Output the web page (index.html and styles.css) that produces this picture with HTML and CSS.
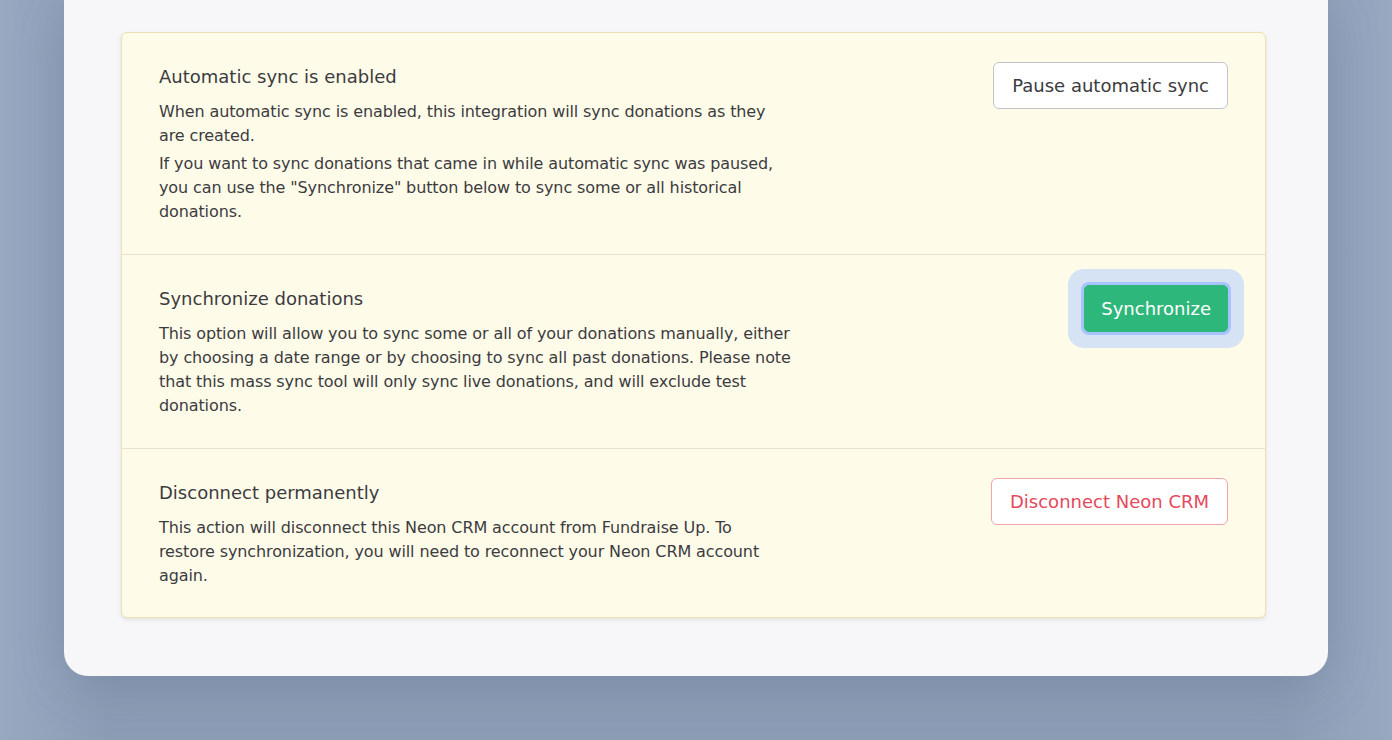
FILE: index.html
```html
<!DOCTYPE html>
<html lang="en">
<head>
    <meta charset="UTF-8">
    <meta name="viewport" content="width=device-width, initial-scale=1.0">
    <title>Neon CRM integration</title>
    <link rel="stylesheet" href="styles.css">
</head>
<body>

    <div class="panel">
        <div class="sync-card">
            <div class="sync-row">
                <div class="sync-text">
                    <h3>Automatic sync is enabled</h3>
                    <p>When automatic sync is enabled, this integration will sync donations as they are created.</p>
                    <p>If you want to sync donations that came in while automatic sync was paused, you can use the "Synchronize" button below to sync some or all historical donations.</p>
                </div>
                <button type="button" class="btn btn-default">Pause automatic sync</button>
            </div>

            <div class="sync-row">
                <div class="sync-text">
                    <h3>Synchronize donations</h3>
                    <p>This option will allow you to sync some or all of your donations manually, either by choosing a date range or by choosing to sync all past donations. Please note that this mass sync tool will only sync live donations, and will exclude test donations.</p>
                </div>
                <button type="button" class="btn btn-primary focused">Synchronize</button>
            </div>

            <div class="sync-row">
                <div class="sync-text">
                    <h3>Disconnect permanently</h3>
                    <p>This action will disconnect this Neon CRM account from Fundraise Up. To restore synchronization, you will need to reconnect your Neon CRM account again.</p>
                </div>
                <button type="button" class="btn btn-danger">Disconnect Neon CRM</button>
            </div>
        </div>
    </div>

</body>
</html>
```

FILE: styles.css
```css
body {
    margin: 0;
    font-family: "DejaVu Sans", Arial, sans-serif;
    color: #3b3b40;
    background: linear-gradient(90deg, #98a8c1 0%, #8c9cb5 8%, #8c9cb5 92%, #98a8c1 100%);
    min-height: 740px;
}
.panel {
    margin: 0 64px;
    padding: 32px 62px 58px 57px;
    background-color: #f7f7fa;
    border-radius: 0 0 24px 24px;
    box-shadow: 0 10px 50px rgba(70, 90, 120, 0.25);
}
.sync-card {
    background-color: #fffbe9;
    border: 1px solid #eee0b6;
    border-radius: 6px;
    box-shadow: 0 2px 4px rgba(120, 110, 80, 0.15);
}
.sync-row {
    display: flex;
    justify-content: space-between;
    align-items: flex-start;
    padding: 30px 37px 30px 37px;
    border-top: 1px solid #ebe3c9;
}
.sync-row:first-child {
    border-top: none;
}
.sync-row:last-child {
    padding-bottom: 29px;
}
.sync-text {
    max-width: 633px;
    padding-top: 1px;
}
.sync-text h3 {
    margin: 0 0 10px;
    font-size: 18px;
    font-weight: 400;
    line-height: 26px;
}
.sync-text p {
    margin: 0 0 4px;
    font-size: 16px;
    line-height: 24px;
    letter-spacing: -0.11px;
}
.sync-text p:last-child {
    margin-bottom: 0;
}
.btn {
    font-family: inherit;
    font-size: 18px;
    line-height: 25px;
    margin-top: -1px;
    padding: 10px 18px;
    border-radius: 6px;
    background-color: #fff;
    cursor: pointer;
    white-space: nowrap;
}
.btn-default {
    border: 1px solid #c2c4ca;
    color: #3b3b40;
}
.btn-primary {
    margin-top: 0;
    padding: 10px 16px;
    border: 1px solid #2eb77a;
    background-color: #2eb77a;
    color: #fff;
}
.btn-primary.focused {
    box-shadow: 0 0 0 3px #a6c3fb, 0 0 0 16px #d6e3f4;
    border-radius: 5px;
}
.btn-danger {
    border: 1px solid #f4a3a8;
    color: #e6485c;
}
```
